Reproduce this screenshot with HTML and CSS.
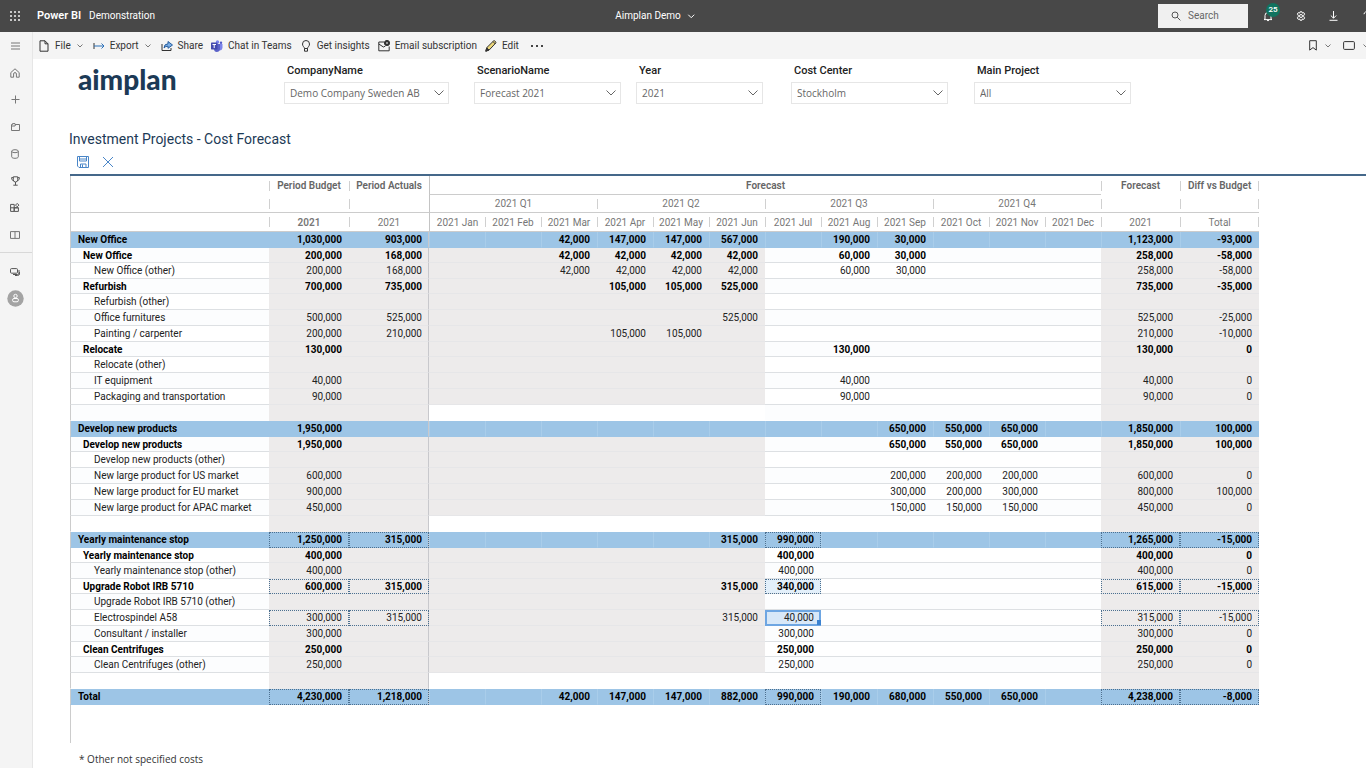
FILE: index.html
```html
<!DOCTYPE html>
<html lang="en">
<head>
<meta charset="utf-8">
<title>Aimplan Demo - Power BI</title>
<link rel="stylesheet" href="styles.css">
</head>
<body>
<header class="topbar">
  <button class="icon-btn" aria-label="App launcher"><svg width="10" height="10" viewBox="0 0 10 10" fill="#fff"><path d="M0 0h2v2H0zM4 0h2v2H4zM8 0h2v2H8zM0 4h2v2H0zM4 4h2v2H4zM8 4h2v2H8zM0 8h2v2H0zM4 8h2v2H4zM8 8h2v2H8z" opacity=".7"/></svg></button>
  <a class="brand" href="#">Power BI</a>
  <a class="workspace" href="#">Demonstration</a>
  <button class="report-name">Aimplan Demo <svg width="8" height="5" viewBox="0 0 8 5" class="line"><path d="M1 .7l3 3 3-3"/></svg></button>
  <div class="top-actions">
    <label class="search"><svg width="10" height="10" viewBox="0 0 10 10" class="line"><circle cx="4" cy="4" r="3"/><path d="M6.2 6.2L9.4 9.4"/></svg><input type="search" placeholder="Search" aria-label="Search"></label>
    <button class="top-icon" aria-label="Notifications"><svg width="10" height="11" viewBox="0 0 10 11" class="line"><path d="M2 8V4.500a3 3 0 0 1 6 0V8l1 .6H1zM4 9.200q1 1.500 2 0"/></svg><span class="badge">25</span></button>
    <button class="top-icon" aria-label="Settings"><svg width="10" height="10" viewBox="0 0 10 10" class="line"><path d="M4 .8h2l.4 1.300 1.300-.5 1 1.500-1 1v1.800l1 1-1 1.500-1.300-.5L6 9.200H4l-.4-1.300-1.300.5-1-1.500 1-1V4.100l-1-1 1-1.500 1.300.5z"/><circle cx="5" cy="5" r="1.500"/></svg></button>
    <button class="top-icon" aria-label="Download"><svg width="9" height="10" viewBox="0 0 9 10" class="line"><path d="M4.500 0v7M1.800 4.500l2.700 2.700 2.700-2.700M.5 9.300h8"/></svg></button>
    <button class="top-icon" aria-label="Help"><svg width="8" height="11" viewBox="0 0 8 11" class="line"><path d="M1 3.200a3 2.600 0 1 1 4.500 2.300Q4 6.300 4 8M4 9.500v1"/></svg></button>
  </div>
</header>
<div class="shell">
  <nav class="rail" aria-label="Main">
    <button aria-label="Menu"><svg width="9" height="8" viewBox="0 0 9 8" class="line"><path d="M0 1h9M0 4h9M0 7h9"/></svg></button>
    <button aria-label="Home"><svg width="10" height="10" viewBox="0 0 10 10" class="line"><path d="M.8 4.600L5 .8l4.200 3.800v4.600H6.400V6a1.400 1.400 0 0 0-2.800 0v3.200H.8z"/></svg></button>
    <button aria-label="Create"><svg width="9" height="9" viewBox="0 0 9 9" class="line"><path d="M4.500.5v8M.5 4.500h8"/></svg></button>
    <button aria-label="Browse"><svg width="9" height="8" viewBox="0 0 9 8" class="line"><path d="M.5 7.500v-6h1V.6H4v.9h4.500v6zM.5 3H4l.6-1.500"/></svg></button>
    <button aria-label="Data hub"><svg width="8" height="10" viewBox="0 0 8 10" class="line"><ellipse cx="4" cy="2.200" rx="3.300" ry="1.500"/><path d="M.7 2.200v5.600c0 2 6.600 2 6.600 0V2.200"/></svg></button>
    <button aria-label="Goals"><svg width="9" height="10" viewBox="0 0 9 10" class="line dim"><path d="M2.300.8h4.400v3a2.200 2.200 0 0 1-4.400 0zM2.300 1.600H.6c0 2 .6 2.800 2 3M6.700 1.600h1.700c0 2-.6 2.800-2 3M4.500 6v3M2.300 9.200h4.400"/></svg></button>
    <button aria-label="Apps"><svg width="10" height="9" viewBox="0 0 10 9" class="line dim"><path d="M.6 1.400h3.600v7H.6zM.6 4.800h7.800M4.200 4.800h4.200v3.600H4.200zM7.200.4l1.700 1.700-1.700 1.700-1.700-1.700z"/></svg></button>
    <button aria-label="Learn"><svg width="10" height="8" viewBox="0 0 10 8" class="line"><path d="M.5.6h9v6.800h-9zM5 .6v6.800"/></svg></button>
    <hr>
    <button aria-label="Workspaces"><svg width="10" height="8" viewBox="0 0 10 8" class="line dim"><rect x=".5" y=".6" width="7" height="4.600" rx="1"/><path d="M9 2v3q0 1.500-1.500 1.500H3M9.600 4v2q-.4 1.400-2 1.500H5"/></svg></button>
    <button aria-label="Demonstration"><svg width="17" height="17" viewBox="0 0 17 17"><circle cx="8.500" cy="8.500" r="8.200" fill="#a3a3a3"/><g fill="none" stroke="#fff"><circle cx="8.500" cy="6" r="1.700"/><rect x="5.600" y="8.500" width="5.800" height="3.300" rx="1.400"/></g></svg></button>
  </nav>
  <div class="main">
    <div class="toolbar">
      <button><svg width="12" height="12" viewBox="0 0 12 12" class="line dark"><path d="M2 .8h5l3 3v7.400H2zM7 .8v3h3"/></svg>File <svg class="chev" width="6" height="4" viewBox="0 0 6 4"><path d="M.5.5L3 3 5.500.5"/></svg></button>
      <button><svg width="12" height="12" viewBox="0 0 12 12" class="line"><path d="M1 3v6" stroke="#333"/><path d="M1 6h10M8.500 3.500L11 6 8.500 8.500" stroke="#2b70b8"/></svg>Export <svg class="chev" width="6" height="4" viewBox="0 0 6 4"><path d="M.5.5L3 3 5.500.5"/></svg></button>
      <button><svg width="12" height="12" viewBox="0 0 12 12" class="line"><path d="M1 4v6.500h9V8" stroke="#333"/><path d="M3 8q0-4 4-4.200V1.500L11.500 5 7 8.300V6.200Q4.500 6 3 8z" fill="#7aaee6" stroke="#285e9e"/></svg>Share</button>
      <button><svg width="12" height="12" viewBox="0 0 12 12"><path d="M7 4h4.500v4q-.5 2.500-3 2.500H6z" fill="#7b83eb"/><circle cx="6.500" cy="2" r="1.700" fill="#7b83eb"/><circle cx="10" cy="2.700" r="1.200" fill="#5059c9"/><path d="M3 4h6v5q-.5 3-3.200 3T3 9z" fill="#5b62c8"/><rect y="2.600" width="6.500" height="6.800" rx=".6" fill="#4349ae"/><path d="M1.500 4.500H5M3.200 4.500v3.600" stroke="#fff"/></svg>Chat in Teams</button>
      <button><svg width="12" height="12" viewBox="0 0 12 12" class="line dark"><path d="M4.500 8.500C4.500 7 2.500 6.500 2.500 4a3.500 3.500 0 0 1 7 0c0 2.500-2 3-2 4.500zM4.500 8.500v2.700h3V8.500"/></svg>Get insights</button>
      <button><svg width="12" height="12" viewBox="0 0 12 12" class="line dark"><path d="M6 2H.8v8.800h10.400V6.500M.8 4l4.600 3 2-1"/><circle cx="9" cy="3" r="2.600" fill="#333"/><path d="M8 3h2" stroke="#fff"/></svg>Email subscription</button>
      <button><svg width="12" height="12" viewBox="0 0 12 12"><path d="M.8 11.200l1-3.600L8.600.9q1-.5 1.800.5t.4 1.600L4.200 10z" fill="#ecd77a" stroke="#333"/><path d="M.8 11.200l1-3.400L4 10zM8 1.500L10.300 4" fill="#333" stroke="#333"/></svg>Edit</button>
      <button class="more" aria-label="More options"><svg width="12" height="2" viewBox="0 0 12 2"><path d="M0 0h2v2H0zM5 0h2v2H5zM10 0h2v2h-2z" fill="#444"/></svg></button>
      <div class="tool-right">
        <button aria-label="Bookmarks"><svg width="8" height="11" viewBox="0 0 8 11" class="line dark"><path d="M.7.7h6.600v9.400L4 7.600.7 10.100z"/></svg><svg class="chev" width="6" height="4" viewBox="0 0 6 4"><path d="M.5.5L3 3 5.500.5"/></svg></button>
        <button aria-label="View"><svg width="12" height="9" viewBox="0 0 12 9" class="line dark"><rect x=".6" y=".6" width="10.800" height="7.800" rx="1"/></svg><svg class="chev" width="6" height="4" viewBox="0 0 6 4"><path d="M.5.5L3 3 5.500.5"/></svg></button>
      </div>
    </div>
    <main class="report">
      <div class="filters">
        <div class="logo">aimplan</div>
        <div class="slicer w-company"><label for="f1">CompanyName</label><div class="pick"><select id="f1"><option>Demo Company Sweden AB</option></select><svg width="10" height="6" viewBox="0 0 10 6"><path d="M.5.5L5 5 9.500.5"/></svg></div></div>
        <div class="slicer w-scenario"><label for="f2">ScenarioName</label><div class="pick"><select id="f2"><option>Forecast 2021</option></select><svg width="10" height="6" viewBox="0 0 10 6"><path d="M.5.5L5 5 9.500.5"/></svg></div></div>
        <div class="slicer w-year"><label for="f3">Year</label><div class="pick"><select id="f3"><option>2021</option></select><svg width="10" height="6" viewBox="0 0 10 6"><path d="M.5.5L5 5 9.500.5"/></svg></div></div>
        <div class="slicer w-center"><label for="f4">Cost Center</label><div class="pick"><select id="f4"><option>Stockholm</option></select><svg width="10" height="6" viewBox="0 0 10 6"><path d="M.5.5L5 5 9.500.5"/></svg></div></div>
        <div class="slicer w-project"><label for="f5">Main Project</label><div class="pick"><select id="f5"><option>All</option></select><svg width="10" height="6" viewBox="0 0 10 6"><path d="M.5.5L5 5 9.500.5"/></svg></div></div>
      </div>
      <h1>Investment Projects - Cost Forecast</h1>
      <div class="grid-tools">
        <button aria-label="Save"><svg width="12" height="12" viewBox="0 0 12 12" fill="none" stroke="#4a86c8"><path d="M.5.5h11v11H2L.5 10zM2.500.5v4.500h7V.5M3.500 11.500V8h5.500v3.500M5.500 8.500v2.500M2.500 3h7"/></svg></button>
        <button aria-label="Discard"><svg width="10" height="10" viewBox="0 0 10 10" fill="none" stroke="#4a86c8"><path d="M0 0l10 10M10 0L0 10"/></svg></button>
      </div>
      <div class="grid">
        <table>
          <colgroup><col class="c-name"><col class="c-sum" span="2"><col class="c-month" span="12"><col class="c-total" span="2"></colgroup>
          <thead>
            <tr class="h1"><th><th class="tick">Period Budget<th class="tick">Period Actuals<th class="edge under" colspan="12">Forecast<th class="tick">Forecast<th class="tick end">Diff vs Budget</tr>
            <tr class="h2"><th><th class="tick"><th class="tick"><th class="edge" colspan="3">2021 Q1<th class="tick" colspan="3">2021 Q2<th class="tick" colspan="3">2021 Q3<th class="tick" colspan="3">2021 Q4<th class="tick"><th class="tick end"></tr>
            <tr class="h3"><th><th class="tick strong">2021<th class="tick">2021<th class="edge">2021 Jan<th class="tick">2021 Feb<th class="tick">2021 Mar<th class="tick">2021 Apr<th class="tick">2021 May<th class="tick">2021 Jun<th class="tick">2021 Jul<th class="tick">2021 Aug<th class="tick">2021 Sep<th class="tick">2021 Oct<th class="tick">2021 Nov<th class="tick">2021 Dec<th class="tick">2021<th class="tick end">Total</tr>
          </thead>
          <tbody>
            <tr class="group"><th>New Office<td>1,030,000<td>903,000<td><td><td>42,000<td>147,000<td>147,000<td>567,000<td><td>190,000<td>30,000<td><td><td><td>1,123,000<td>-93,000</tr>
            <tr class="sub"><th>New Office<td>200,000<td>168,000<td><td><td>42,000<td>42,000<td>42,000<td>42,000<td><td>60,000<td>30,000<td><td><td><td>258,000<td>-58,000</tr>
            <tr class="item"><th>New Office (other)<td>200,000<td>168,000<td><td><td>42,000<td>42,000<td>42,000<td>42,000<td><td>60,000<td>30,000<td><td><td><td>258,000<td>-58,000</tr>
            <tr class="sub"><th>Refurbish<td>700,000<td>735,000<td><td><td><td>105,000<td>105,000<td>525,000<td><td><td><td><td><td><td>735,000<td>-35,000</tr>
            <tr class="item"><th>Refurbish (other)<td><td><td><td><td><td><td><td><td><td><td><td><td><td><td><td></tr>
            <tr class="item"><th>Office furnitures<td>500,000<td>525,000<td><td><td><td><td><td>525,000<td><td><td><td><td><td><td>525,000<td>-25,000</tr>
            <tr class="item"><th>Painting / carpenter<td>200,000<td>210,000<td><td><td><td>105,000<td>105,000<td><td><td><td><td><td><td><td>210,000<td>-10,000</tr>
            <tr class="sub"><th>Relocate<td>130,000<td><td><td><td><td><td><td><td><td>130,000<td><td><td><td><td>130,000<td>0</tr>
            <tr class="item"><th>Relocate (other)<td><td><td><td><td><td><td><td><td><td><td><td><td><td><td><td></tr>
            <tr class="item"><th>IT equipment<td>40,000<td><td><td><td><td><td><td><td><td>40,000<td><td><td><td><td>40,000<td>0</tr>
            <tr class="item"><th>Packaging and transportation<td>90,000<td><td><td><td><td><td><td><td><td>90,000<td><td><td><td><td>90,000<td>0</tr>
            <tr class="blank"><th><td><td><td><td><td><td><td><td><td><td><td><td><td><td><td><td></tr>
            <tr class="group"><th>Develop new products<td>1,950,000<td><td><td><td><td><td><td><td><td><td>650,000<td>550,000<td>650,000<td><td>1,850,000<td>100,000</tr>
            <tr class="sub"><th>Develop new products<td>1,950,000<td><td><td><td><td><td><td><td><td><td>650,000<td>550,000<td>650,000<td><td>1,850,000<td>100,000</tr>
            <tr class="item"><th>Develop new products (other)<td><td><td><td><td><td><td><td><td><td><td><td><td><td><td><td></tr>
            <tr class="item"><th>New large product for US market<td>600,000<td><td><td><td><td><td><td><td><td><td>200,000<td>200,000<td>200,000<td><td>600,000<td>0</tr>
            <tr class="item"><th>New large product for EU market<td>900,000<td><td><td><td><td><td><td><td><td><td>300,000<td>200,000<td>300,000<td><td>800,000<td>100,000</tr>
            <tr class="item"><th>New large product for APAC market<td>450,000<td><td><td><td><td><td><td><td><td><td>150,000<td>150,000<td>150,000<td><td>450,000<td>0</tr>
            <tr class="blank"><th><td><td><td><td><td><td><td><td><td><td><td><td><td><td><td><td></tr>
            <tr class="group"><th>Yearly maintenance stop<td class="rel">1,250,000<td class="rel">315,000<td><td><td><td><td><td>315,000<td class="rel">990,000<td><td><td><td><td><td class="rel">1,265,000<td class="rel">-15,000</tr>
            <tr class="sub"><th>Yearly maintenance stop<td>400,000<td><td><td><td><td><td><td><td>400,000<td><td><td><td><td><td>400,000<td>0</tr>
            <tr class="item"><th>Yearly maintenance stop (other)<td>400,000<td><td><td><td><td><td><td><td>400,000<td><td><td><td><td><td>400,000<td>0</tr>
            <tr class="sub"><th>Upgrade Robot IRB 5710<td class="rel">600,000<td class="rel">315,000<td><td><td><td><td><td>315,000<td class="rel tint">340,000<td><td><td><td><td><td class="rel">615,000<td class="rel">-15,000</tr>
            <tr class="item"><th>Upgrade Robot IRB 5710 (other)<td><td><td><td><td><td><td><td><td><td><td><td><td><td><td><td></tr>
            <tr class="item"><th>Electrospindel A58<td class="rel">300,000<td class="rel">315,000<td><td><td><td><td><td>315,000<td class="active">40,000<td><td><td><td><td><td class="rel">315,000<td class="rel">-15,000</tr>
            <tr class="item"><th>Consultant / installer<td>300,000<td><td><td><td><td><td><td><td>300,000<td><td><td><td><td><td>300,000<td>0</tr>
            <tr class="sub"><th>Clean Centrifuges<td>250,000<td><td><td><td><td><td><td><td>250,000<td><td><td><td><td><td>250,000<td>0</tr>
            <tr class="item"><th>Clean Centrifuges (other)<td>250,000<td><td><td><td><td><td><td><td>250,000<td><td><td><td><td><td>250,000<td>0</tr>
            <tr class="blank"><th><td><td><td><td><td><td><td><td><td><td><td><td><td><td><td><td></tr>
            <tr class="group"><th>Total<td class="rel">4,230,000<td class="rel">1,218,000<td><td><td>42,000<td>147,000<td>147,000<td>882,000<td class="rel">990,000<td>190,000<td>680,000<td>550,000<td>650,000<td><td class="rel">4,238,000<td class="rel">-8,000</tr>
          </tbody>
        </table>
        <div class="rest"></div>
      </div>
      <p class="note">* Other not specified costs</p>
    </main>
  </div>
</div>
</body>
</html>
```
FILE: styles.css
```css
* { box-sizing: border-box; }
body {
  margin: 0;
  min-height: 100vh;
  display: flex;
  flex-direction: column;
  overflow: hidden;
  background: #fff;
  color: #333;
  font: 10px/14px Roboto, "Noto Sans", sans-serif;
}
button {
  border: 0;
  padding: 0;
  background: none;
  color: inherit;
  font: inherit;
  display: flex;
  align-items: center;
  white-space: nowrap;
}
a { color: inherit; text-decoration: none; }
svg { display: block; flex: none; }
.line { fill: none; stroke: currentColor; }
.dark { color: #333; }
.dim { color: #555; }
.chev { fill: none; stroke: #777; }

.topbar {
  position: relative;
  height: 32px;
  display: flex;
  align-items: center;
  background: #484848;
  color: #fff;
  overflow: hidden;
}
.icon-btn { margin-left: 10px; }
.brand { margin-left: 17px; font-size: 11px; font-weight: 600; }
.workspace { margin-left: 8px; }
.report-name {
  position: absolute;
  left: 50%;
  transform: translateX(-50%);
  margin-left: -28px;
  gap: 6px;
}
.top-actions { margin-left: auto; display: flex; align-items: center; margin-right: -17px; }
.search {
  display: flex;
  align-items: center;
  gap: 7px;
  width: 90px;
  height: 24px;
  padding-left: 13px;
  background: #f0f0f0;
  color: #555;
  margin-right: 3px;
}
.search input {
  width: 60px;
  border: 0;
  padding: 0;
  background: none;
  font: inherit;
}
.search input::placeholder { color: #666; opacity: 1; }
.top-icon { position: relative; width: 33px; height: 32px; justify-content: center; }
.badge {
  position: absolute;
  left: 15px;
  top: 3px;
  width: 14px;
  height: 14px;
  border-radius: 7px;
  background: #11735f;
  color: #fff;
  font-size: 8px;
  font-weight: 600;
}

.shell { flex: 1; display: flex; }
.rail {
  width: 33px;
  background: #f4f4f4;
  border-right: 1px solid #e6e6e6;
  color: #777;
}
.rail button { width: 30px; height: 27px; justify-content: center; }
.rail hr { margin: 4px 0 5px; border: 0; border-top: 1px solid #d8d8d8; }
.main { flex: 1; min-width: 0; }

.toolbar {
  display: flex;
  align-items: center;
  gap: 8px;
  height: 27px;
  padding-left: 5px;
  background: #f4f4f4;
  overflow: hidden;
}
.toolbar button { gap: 5px; }
.toolbar > button .chev { margin: 0 2px 0 1px; }
.toolbar .more { margin-left: 4px; }
.tool-right { display: flex; gap: 12px; margin-left: auto; margin-right: -3px; }
.tool-right button { gap: 8px; }

.report { padding-left: 36px; }
.filters { display: flex; padding-top: 4px; }
.logo {
  width: 215px;
  padding-left: 9px;
  color: #1c3a56;
  font: 900 28px/32px Lato, sans-serif;
}
.slicer label {
  display: block;
  padding-left: 3px;
  font: 500 11px/16px Roboto, sans-serif;
  color: #222;
}
.pick { display: grid; align-items: center; margin-top: 3px; }
.pick select, .pick svg { grid-area: 1 / 1; }
.pick select {
  appearance: none;
  width: 100%;
  height: 22px;
  padding: 0 5px;
  border: 1px solid #e6e6e6;
  border-radius: 0;
  background: #fff;
  color: #666;
  font: 10px/14px "Open Sans", sans-serif;
}
.pick svg { justify-self: end; margin-right: 5px; fill: none; stroke: #666; pointer-events: none; }
.w-company { width: 165px; margin-right: 25px; }
.w-scenario { width: 147px; margin-right: 15px; }
.w-year { width: 127px; margin-right: 28px; }
.w-center { width: 157px; margin-right: 26px; }
.w-project { width: 157px; }

h1 {
  margin: 25px 0 0;
  font: 400 14px/20px Roboto, sans-serif;
  color: #1c3a56;
}
.grid-tools { display: flex; align-items: center; gap: 14px; height: 25px; padding-left: 8px; }

.grid {
  display: flex;
  flex-direction: column;
  margin-left: 1px;
  border-top: 2px solid #45688a;
  overflow: hidden;
}
table {
  table-layout: fixed;
  width: 1189px;
  border-collapse: separate;
  border-spacing: 0;
}
.c-name { width: 199px; }
.c-sum { width: 80px; }
.c-month { width: 56px; }
.c-total { width: 79px; }
th, td { padding: 1px 0 0; overflow: hidden; white-space: nowrap; }
th:first-child { border-left: 1px solid #ccc; }

thead th {
  height: 18px;
  color: #777;
  font-weight: 400;
  line-height: 14px;
  background: linear-gradient(#d0d0d0, #d0d0d0) left center / 1px 10px no-repeat;
}
thead th:first-child { background: none; }
thead th.edge { background: none; border-left: 1px solid #c4c4c4; }
thead th.end { background: linear-gradient(#d0d0d0, #d0d0d0) left center / 1px 10px no-repeat, linear-gradient(#d0d0d0, #d0d0d0) right center / 1px 10px no-repeat; }
.h1 th { height: 19px; font-weight: 600; color: #666; }
.h1 th.under { border-bottom: 1px solid #ccc; }
.h2 th { border-bottom: 1px solid #ccc; }
.h3 th { height: 19px; border-bottom: 1px solid #ccc; }
.h3 th.strong { font-weight: 600; }

tbody td {
  position: relative;
  height: 16px;
  padding-right: 7px;
  border-bottom: 1px solid #e6e6e8;
  background: #edebeb;
  color: #222;
  line-height: 14px;
  text-align: right;
}
tbody th {
  height: 16px;
  border-bottom: 1px solid #dde0e3;
  color: #222;
  font-weight: 400;
  line-height: 14px;
  text-align: left;
}
tbody tr:nth-child(even) th { background: #fcfdfe; }
tbody td:nth-child(3) { border-right: 1px solid #c8c8cc; padding-right: 6px; }
tbody td:nth-child(n+10):nth-child(-n+15) { background: #fff; border-color: #dde0e3; }
tbody tr:nth-child(even) td:nth-child(n+10):nth-child(-n+15) { background: #fcfdfe; }
.item th { padding-left: 23px; }
.sub th, .sub td { height: 15px; font-weight: 700; color: #000; line-height: 13px; }
.sub th { padding-left: 12px; }
tbody tr.group:nth-child(n) th,
tbody tr.group:nth-child(n) td:nth-child(n):nth-child(n) {
  background: #9dc5e6;
  border-bottom-color: #9dc5e6;
  color: #000;
  font-weight: 700;
}
.group th { padding-left: 7px; }
tbody .group td:nth-child(n+4):nth-child(n) { border-left: 1px solid #a9cdea; }
.blank th, .blank td { border-bottom-color: transparent; }
tbody .blank td:nth-child(n+4):nth-child(-n+15) { background: #fff; border-bottom-color: #fff; }
tbody .rel { outline: 1px dotted #4c7090; outline-offset: -1px; }
tbody tr.sub td.tint:nth-child(10):nth-child(n) { background: #e2effa; }
tbody tr td.active:nth-child(10):nth-child(n) {
  outline: 2px solid #6ea6e2;
  outline-offset: -2px;
  background: #d8e8f8;
}
.active::after {
  content: "";
  position: absolute;
  right: 0;
  bottom: 0;
  width: 4px;
  height: 5px;
  background: #3b82d0;
}
.rest { height: 38px; border-left: 1px solid #ccc; }
.note {
  margin: 9px 0 0;
  padding-left: 10px;
  font-family: "Open Sans", sans-serif;
}
```
